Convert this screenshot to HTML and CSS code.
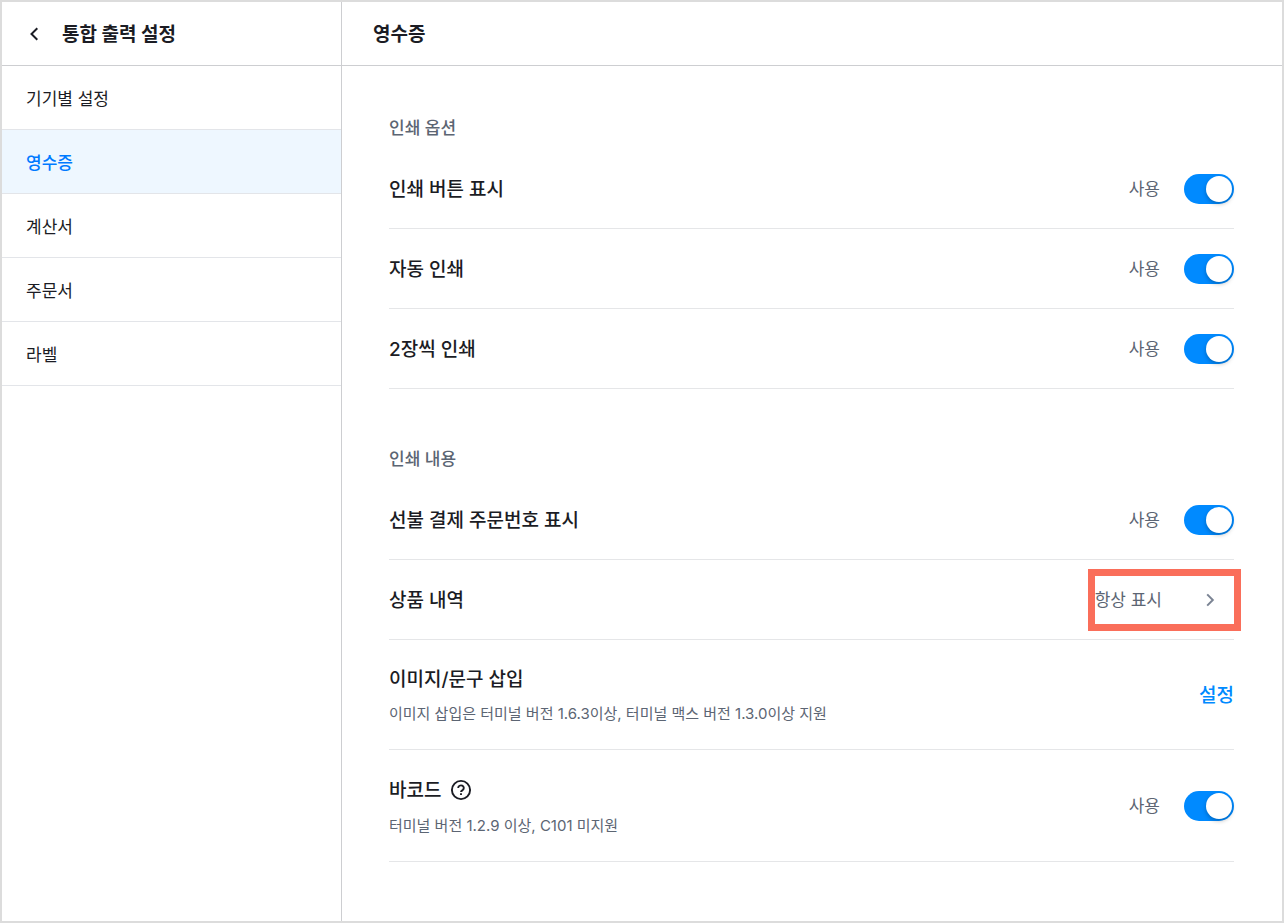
FILE: index.html
```
<!DOCTYPE html>
<html lang="ko">
<head>
    <meta charset="UTF-8">
    <meta name="viewport" content="width=device-width, initial-scale=1.0">
    <title>통합 출력 설정</title>
    <link rel="stylesheet" href="styles.css">
</head>
<body>
    <div class="app">
        <aside class="sidebar">
            <header class="header sidebar-header">
                <button type="button" class="back" aria-label="뒤로">
                    <svg width="20" height="20" viewBox="0 0 20 20" fill="none" stroke="currentColor" stroke-width="2"><path d="M13.3 4.3 7.5 10l5.8 5.7"/></svg>
                </button>
                <h1>통합 출력 설정</h1>
            </header>
            <nav class="menu">
                <a href="#device">기기별 설정</a>
                <a href="#receipt" class="active" aria-current="page">영수증</a>
                <a href="#bill">계산서</a>
                <a href="#order">주문서</a>
                <a href="#label">라벨</a>
            </nav>
        </aside>

        <main class="main">
            <header class="header main-header">
                <h2>영수증</h2>
            </header>
            <div class="content">
                <section class="section">
                    <h3>인쇄 옵션</h3>
                    <div class="row">
                        <label class="name" for="print-button">인쇄 버튼 표시</label>
                        <span class="state">사용</span>
                        <input type="checkbox" role="switch" class="toggle" id="print-button" checked>
                    </div>
                    <div class="row">
                        <label class="name" for="auto-print">자동 인쇄</label>
                        <span class="state">사용</span>
                        <input type="checkbox" role="switch" class="toggle" id="auto-print" checked>
                    </div>
                    <div class="row">
                        <label class="name" for="two-copies">2장씩 인쇄</label>
                        <span class="state">사용</span>
                        <input type="checkbox" role="switch" class="toggle" id="two-copies" checked>
                    </div>
                </section>

                <section class="section">
                    <h3>인쇄 내용</h3>
                    <div class="row">
                        <label class="name" for="order-number">선불 결제 주문번호 표시</label>
                        <span class="state">사용</span>
                        <input type="checkbox" role="switch" class="toggle" id="order-number" checked>
                    </div>
                    <div class="row">
                        <span class="name" id="items-name">상품 내역</span>
                        <button type="button" class="select-button highlight" aria-describedby="items-name">
                            항상 표시
                            <svg width="24" height="24" viewBox="0 0 24 24" fill="none" stroke="currentColor" stroke-width="2"><path d="m9.2 6.4 5.6 5.6-5.6 5.6"/></svg>
                        </button>
                    </div>
                    <div class="row row-tall">
                        <div class="info">
                            <span class="name">이미지/문구 삽입</span>
                            <p>이미지 삽입은 터미널 버전 1.6.3이상, 터미널 맥스 버전 1.3.0이상 지원</p>
                        </div>
                        <button type="button" class="link-button">설정</button>
                    </div>
                    <div class="row row-tall">
                        <div class="info">
                            <div class="name-line">
                                <label class="name" for="barcode">바코드</label>
                                <button type="button" class="help" aria-label="도움말">
                                    <svg width="22" height="22" viewBox="0 0 22 22" fill="none" stroke="currentColor" stroke-width="1.9"><circle cx="11" cy="11" r="9.1"/><path d="M8.2 9a2.8 2.6 0 1 1 4.4 2.1c-1 .6-1.6 1-1.6 2"/><path d="M11 14.2v1.9"/></svg>
                                </button>
                            </div>
                            <p>터미널 버전 1.2.9 이상, C101 미지원</p>
                        </div>
                        <span class="state">사용</span>
                        <input type="checkbox" role="switch" class="toggle" id="barcode" checked>
                    </div>
                </section>
            </div>
        </main>
    </div>
</body>
</html>
```
FILE: styles.css
```
* {
    box-sizing: border-box;
}
body {
    margin: 0;
    font-family: Inter, "Noto Sans CJK KR", sans-serif;
    font-size: 17px;
    line-height: 24px;
    color: #1b1c24;
    background: #fff;
}
h1, h2, h3, p {
    margin: 0;
}
button {
    padding: 0;
    border: 0;
    background: none;
    color: inherit;
    font: inherit;
    cursor: pointer;
}
svg {
    display: block;
}
.app {
    display: flex;
    min-height: 100vh;
    border: 2px solid #dcdcdc;
}
.sidebar {
    flex: 0 0 340px;
    border-right: 1px solid #cdced1;
}
.main {
    flex: 1;
    min-width: 0;
}
.header {
    display: flex;
    align-items: center;
    height: 64px;
    border-bottom: 1px solid #cdced1;
}
.header h1, .header h2 {
    padding-top: 2px;
    font-size: 19px;
    font-weight: 700;
    line-height: 26px;
}
.sidebar-header {
    gap: 18px;
    padding: 0 22px;
}
.main-header {
    padding: 0 31px;
}
.menu a {
    display: flex;
    align-items: center;
    height: 64px;
    padding: 2px 24px 0;
    border-bottom: 1px solid #e3e5e9;
    color: #1b1c24;
    text-decoration: none;
}
.menu a.active {
    background: #eef7ff;
    color: #007aff;
    font-weight: 500;
}
.content {
    padding: 50px 48px 58px 47px;
}
.section + .section {
    margin-top: 58px;
}
.section h3 {
    margin-bottom: 9px;
    font-size: 17px;
    font-weight: 500;
    color: #5c6573;
}
.row {
    display: flex;
    align-items: center;
    min-height: 80px;
    border-bottom: 1px solid #e5e6e8;
}
.row-tall {
    padding: 25px 0 24px;
}
.name {
    flex: 1;
    padding-top: 2px;
    font-size: 19px;
    font-weight: 500;
    line-height: 26px;
}
.info {
    display: flex;
    flex: 1;
    flex-direction: column;
    gap: 10px;
}
.info p {
    font-size: 15px;
    line-height: 22px;
    color: #5c6573;
}
.name-line {
    display: flex;
    align-items: center;
    gap: 9px;
    height: 30px;
}
.name-line .name {
    flex: none;
}
.state {
    margin-right: 24px;
    color: #5c6573;
}
.toggle {
    appearance: none;
    display: flex;
    align-items: center;
    width: 50px;
    height: 30px;
    margin: 0;
    padding: 2px;
    border-radius: 15px;
    background: #c8ccd2;
    cursor: pointer;
}
.toggle::before {
    content: "";
    width: 26px;
    height: 26px;
    border-radius: 50%;
    background: #fff;
    box-shadow: 0 2px 4px rgba(0, 0, 0, 0.25);
}
.toggle:checked {
    justify-content: flex-end;
    background: #008aff;
}
.select-button {
    display: flex;
    align-items: center;
    gap: 36px;
    height: 48px;
    padding-right: 12px;
    color: #5c6573;
}
.select-button svg {
    color: #7b8494;
}
.highlight {
    outline: 7px solid #fa6e5a;
}
.link-button {
    padding-top: 2px;
    font-size: 19px;
    font-weight: 500;
    color: #008aff;
}
```
